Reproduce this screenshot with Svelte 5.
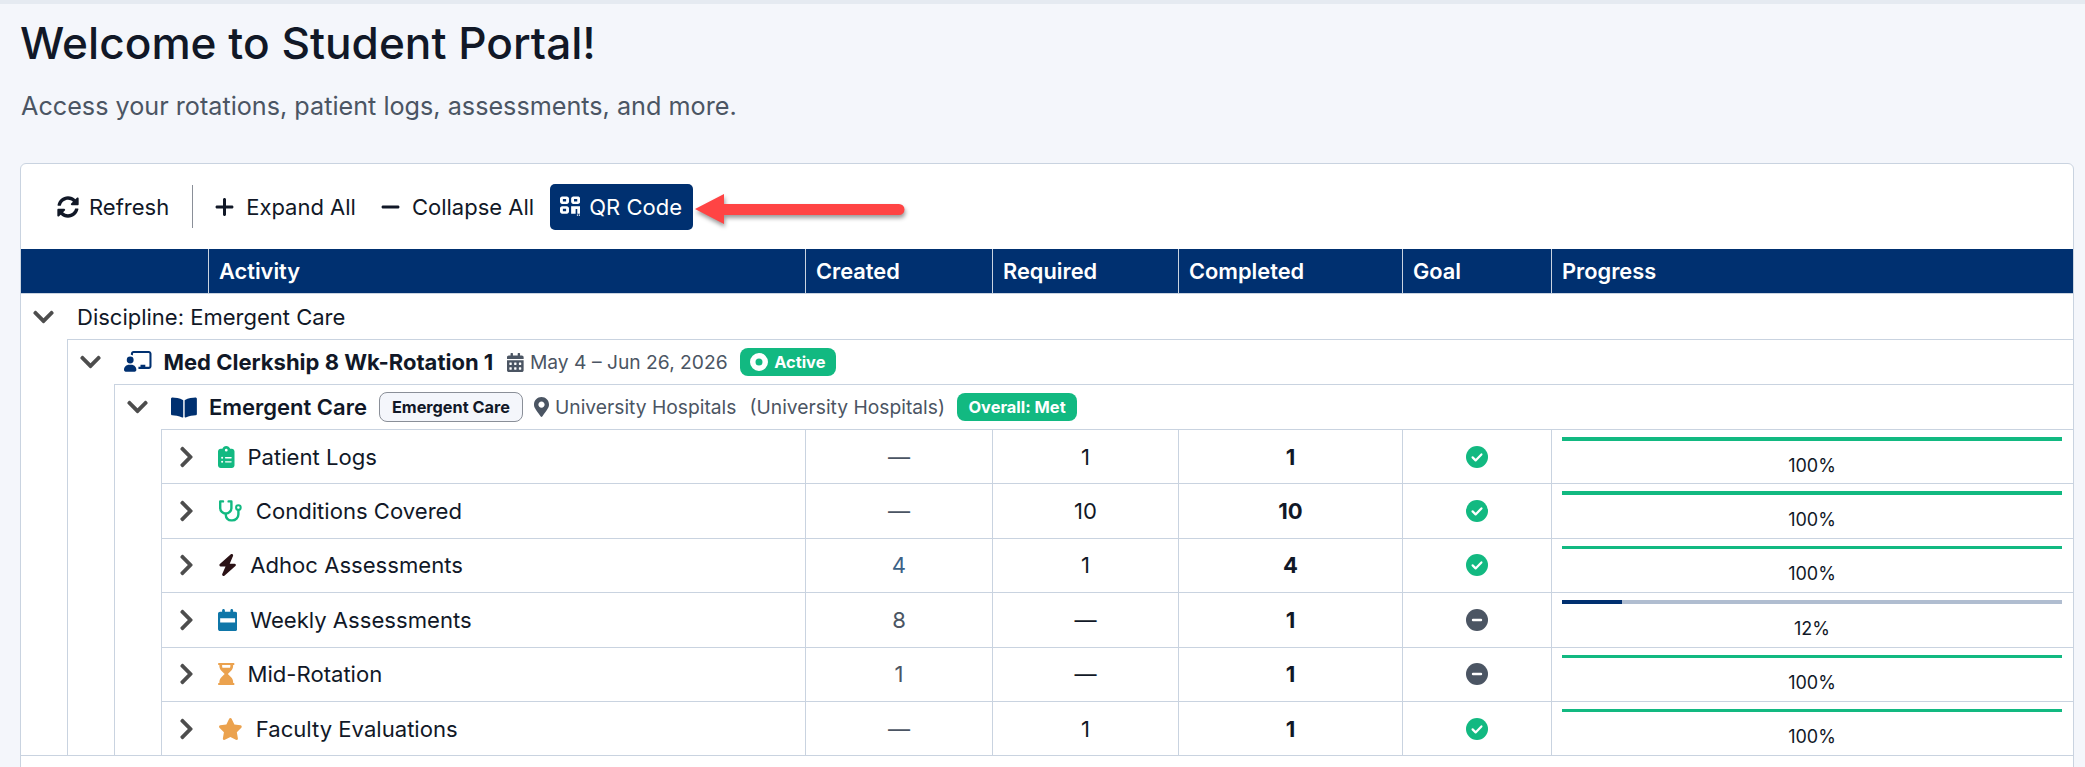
<script>
  // Font Awesome style glyphs, keyed by name
  const glyphs = {
    down: [448, 'M207.029 381.476L12.686 187.132c-9.373-9.373-9.373-24.569 0-33.941l22.667-22.667c9.357-9.357 24.522-9.375 33.901-.04L224 284.505l154.745-154.021c9.379-9.335 24.544-9.317 33.901.04l22.667 22.667c9.373 9.373 9.373 24.569 0 33.941L240.971 381.476c-9.373 9.372-24.569 9.372-33.942 0z'],
    right: [320, 'M285.476 272.971L91.132 467.314c-9.373 9.373-24.569 9.373-33.941 0l-22.667-22.667c-9.357-9.357-9.375-24.522-.04-33.901L188.505 256 34.484 101.255c-9.335-9.379-9.317-24.544.04-33.901l22.667-22.667c9.373-9.373 24.569-9.373 33.941 0L285.475 239.03c9.373 9.372 9.373 24.568.001 33.941z'],
    sync: [512, 'M370.72 133.28C339.458 104.008 298.888 87.962 255.848 88c-77.458.068-144.328 53.178-162.791 126.85-1.344 5.363-6.122 9.15-11.651 9.15H24.103c-7.498 0-13.194-6.807-11.807-14.176C33.933 94.924 134.813 8 256 8c66.448 0 126.791 26.136 171.315 68.685L463.03 40.97C478.149 25.851 504 36.559 504 57.941V192c0 13.255-10.745 24-24 24H345.941c-21.382 0-32.09-25.851-16.971-40.971l41.75-41.749zM32 296h134.059c21.382 0 32.09 25.851 16.971 40.971l-41.75 41.75c31.262 29.273 71.835 45.319 114.876 45.28 77.418-.07 144.315-53.144 162.787-126.849 1.344-5.363 6.122-9.15 11.651-9.15h57.304c7.498 0 13.194 6.807 11.807 14.176C478.067 417.076 377.187 504 256 504c-66.448 0-126.791-26.136-171.315-68.685L48.97 471.03C33.851 486.149 8 475.441 8 454.059V320c0-13.255 10.745-24 24-24z'],
    plus: [448, 'M224 64c-18 0-32 14-32 32v128H64c-18 0-32 14-32 32s14 32 32 32h128v128c0 18 14 32 32 32s32-14 32-32V288h128c18 0 32-14 32-32s-14-32-32-32H256V96c0-18-14-32-32-32z'],
    minus: [448, 'M64 224h320c18 0 32 14 32 32s-14 32-32 32H64c-18 0-32-14-32-32s14-32 32-32z'],
    qr: [448, 'M48 32h104c26 0 48 22 48 48v72c0 26-22 48-48 48H48c-26 0-48-22-48-48V80c0-26 22-48 48-48zm16 56v56h72V88H64zM296 32h104c26 0 48 22 48 48v72c0 26-22 48-48 48H296c-26 0-48-22-48-48V80c0-26 22-48 48-48zm16 56v56h72V88h-72zM48 248h104c26 0 48 22 48 48v72c0 26-22 48-48 48H48c-26 0-48-22-48-48v-72c0-26 22-48 48-48zm16 56v56h72v-56H64zM248 248h200v168h-64V312h-36v104h-100V248zM376 436h28v28h-28zM420 436h28v28h-28z'],
    teach: [640, 'M160 64c0-35 29-64 64-64h352c35 0 64 29 64 64v288c0 35-29 64-64 64H336v-48h48v-48h112v48h80c9 0 16-7 16-16V64c0-9-7-16-16-16H224c-9 0-16 7-16 16v38c-15-8-31-14-48-14V64zM144 128a80 80 0 1 1 0 160 80 80 0 1 1 0-160zm-26 192h52c65 0 118 53 118 118 0 20-16 42-40 42H40c-24 0-40-22-40-42 0-65 53-118 118-118z'],
    book: [576, 'M542.22 32.05c-54.8 3.11-163.72 14.43-230.96 55.59-4.64 2.84-7.27 7.89-7.27 13.17v363.87c0 11.55 12.63 18.85 23.28 13.49 69.18-34.82 169.23-44.32 218.7-46.92 16.89-.89 30.02-14.43 30.02-30.66V62.75c.01-17.71-15.35-31.74-33.77-30.7zM264.73 87.64C197.5 46.48 88.58 35.17 33.78 32.05 15.36 31.01 0 45.04 0 62.75V400.6c0 16.24 13.13 29.78 30.02 30.66 49.49 2.6 149.59 12.11 218.77 46.95 10.62 5.35 23.21-1.94 23.21-13.46V100.63c0-5.29-2.62-10.14-7.27-12.99z'],
    calendar: [448, 'M0 464c0 26.5 21.5 48 48 48h352c26.5 0 48-21.5 48-48V192H0v272zm320-196c0-6.6 5.4-12 12-12h40c6.6 0 12 5.4 12 12v40c0 6.6-5.4 12-12 12h-40c-6.6 0-12-5.4-12-12v-40zm0 128c0-6.6 5.4-12 12-12h40c6.6 0 12 5.4 12 12v40c0 6.6-5.4 12-12 12h-40c-6.6 0-12-5.4-12-12v-40zM192 268c0-6.6 5.4-12 12-12h40c6.6 0 12 5.4 12 12v40c0 6.6-5.4 12-12 12h-40c-6.6 0-12-5.4-12-12v-40zm0 128c0-6.6 5.4-12 12-12h40c6.6 0 12 5.4 12 12v40c0 6.6-5.4 12-12 12h-40c-6.6 0-12-5.4-12-12v-40zM64 268c0-6.6 5.4-12 12-12h40c6.6 0 12 5.4 12 12v40c0 6.6-5.4 12-12 12H76c-6.6 0-12-5.4-12-12v-40zm0 128c0-6.6 5.4-12 12-12h40c6.6 0 12 5.4 12 12v40c0 6.6-5.4 12-12 12H76c-6.6 0-12-5.4-12-12v-40zM400 64h-48V16c0-8.8-7.2-16-16-16h-32c-8.8 0-16 7.2-16 16v48H160V16c0-8.8-7.2-16-16-16h-32c-8.8 0-16 7.2-16 16v48H48C21.5 64 0 85.5 0 112v48h448v-48c0-26.5-21.5-48-48-48z'],
    pin: [384, 'M172.268 501.67C26.97 291.031 0 269.413 0 192 0 85.961 85.961 0 192 0s192 85.961 192 192c0 77.413-26.97 99.031-172.268 309.67-9.535 13.774-29.93 13.773-39.464 0zM192 272c44.183 0 80-35.817 80-80s-35.817-80-80-80-80 35.817-80 80 35.817 80 80 80z'],
    clipboard: [384, 'M192 0c-41.8 0-77.4 26.7-90.5 64H64C28.7 64 0 92.7 0 128v320c0 35.3 28.7 64 64 64h256c35.3 0 64-28.7 64-64V128c0-35.3-28.7-64-64-64h-37.5C269.4 26.7 233.8 0 192 0zm0 64a32 32 0 1 0 0 64 32 32 0 1 0 0-64zM72 272a24 24 0 1 0 48 0 24 24 0 1 0-48 0zm104-16c-8.8 0-16 7.2-16 16s7.2 16 16 16h128c8.8 0 16-7.2 16-16s-7.2-16-16-16H176zM72 368a24 24 0 1 0 48 0 24 24 0 1 0-48 0zm104-16c-8.8 0-16 7.2-16 16s7.2 16 16 16h128c8.8 0 16-7.2 16-16s-7.2-16-16-16H176z'],
    bolt: [448, 'M349.4 44.6c5.9-13.7 1.5-29.7-10.6-38.5s-28.6-8-39.9 1.8l-256 224c-10 8.8-13.6 22.9-8.9 35.3S50.7 288 64 288H175.5L98.6 467.4c-5.9 13.7-1.5 29.7 10.6 38.5s28.6 8 39.9-1.8l256-224c10-8.8 13.6-22.9 8.9-35.3s-16.6-20.7-30-20.7H272.5L349.4 44.6z'],
    week: [448, 'M128 0c18 0 32 14 32 32v32h128V32c0-18 14-32 32-32s32 14 32 32v32h48c26.5 0 48 21.5 48 48v352c0 26.5-21.5 48-48 48H48c-26.5 0-48-21.5-48-48V112c0-26.5 21.5-48 48-48h48V32c0-18 14-32 32-32zM50 215v100h348V215H50z'],
    hourglass: [384, 'M24 0h336c13 0 24 11 24 24s-11 24-24 24h-8v19c0 42-17 83-47 113l-76 76 76 76c30 30 47 71 47 113v19h8c13 0 24 11 24 24s-11 24-24 24H24c-13 0-24-11-24-24s11-24 24-24h8v-19c0-42 17-83 47-113l76-76-76-76C49 150 32 109 32 67V48h-8C11 48 0 37 0 24S11 0 24 0zm72 48v19c0 14 3 28 9 41h174c6-13 9-27 9-41V48H96z'],
    star: [576, 'M316.9 18C311.6 7 300.4 0 288.1 0s-23.4 7-28.8 18L195 150.3 51.4 171.5c-12 1.8-22 10.2-25.7 21.7s-.7 24.2 7.9 32.7L137.8 329 113.2 474.7c-2 12 3 24.2 12.9 31.3s23 8 33.8 2.3l128.3-68.5 128.3 68.5c10.8 5.7 23.9 4.9 33.8-2.3s14.9-19.3 12.9-31.3L438.5 329 542.7 225.9c8.6-8.5 11.7-21.2 7.9-32.7s-13.7-19.9-25.7-21.7L381.2 150.3 316.9 18z']
  };

  const columns = ['', 'Activity', 'Created', 'Required', 'Completed', 'Goal', 'Progress'];

  const activities = [
    { name: 'Patient Logs', icon: 'clipboard', color: '#12b981', created: '—', required: '1', completed: '1', met: true, pct: 100 },
    { name: 'Conditions Covered', icon: 'stethoscope', color: '#12b981', created: '—', required: '10', completed: '10', met: true, pct: 100 },
    { name: 'Adhoc Assessments', icon: 'bolt', color: '#2b1216', created: '4', link: true, required: '1', completed: '4', met: true, pct: 100 },
    { name: 'Weekly Assessments', icon: 'week', color: '#0f76a8', created: '8', required: '—', completed: '1', met: false, pct: 12 },
    { name: 'Mid-Rotation', icon: 'hourglass', color: '#eba24e', created: '1', required: '—', completed: '1', met: false, pct: 100 },
    { name: 'Faculty Evaluations', icon: 'star', color: '#eba24e', created: '—', required: '1', completed: '1', met: true, pct: 100 }
  ];
</script>

{#snippet fa(name, size, color = 'currentColor')}
  <svg class="fa" viewBox="0 0 {glyphs[name][0]} 512" height={size} width={(glyphs[name][0] / 512) * size} fill={color}>
    <path fill-rule="evenodd" d={glyphs[name][1]} />
  </svg>
{/snippet}

<div class="page">
  <h1>Welcome to Student Portal!</h1>
  <p class="lead">Access your rotations, patient logs, assessments, and more.</p>

  <section class="card">
    <div class="toolbar">
      <button class="tool refresh">{@render fa('sync', 22)} Refresh</button>
      <span class="sep"></span>
      <button class="tool">{@render fa('plus', 24)} Expand All</button>
      <button class="tool">{@render fa('minus', 24)} Collapse All</button>
      <button class="tool qr">{@render fa('qr', 23)} QR Code</button>
      <svg class="arrow" width="216" height="40" viewBox="0 0 216 40">
        <path d="M0 17 L29 2 V12 H204 a5 5 0 0 1 0 11 H29 V32 Z" fill="#ff4444" />
      </svg>
    </div>

    <div class="thead">
      {#each columns as col}
        <div class="th">{col}</div>
      {/each}
    </div>

    <div class="level top">
      <div class="group-row first">
        <span class="caret">{@render fa('down', 24, '#4d4d4d')}</span>
        <span>Discipline: Emergent Care</span>
      </div>

      <div class="level">
        <div class="group-row">
          <span class="caret">{@render fa('down', 24, '#4d4d4d')}</span>
          <span class="rot-icon">{@render fa('teach', 22, '#003070')}</span>
          <strong>Med Clerkship 8 Wk-Rotation 1</strong>
          <span class="meta date">{@render fa('calendar', 19, '#4b5563')} May 4 – Jun 26, 2026</span>
          <span class="badge">
            <svg width="18" height="18" viewBox="0 0 18 18"><path fill-rule="evenodd" fill="#fff" d="M9 0a9 9 0 1 1 0 18A9 9 0 0 1 9 0zm0 5.5a3.5 3.5 0 1 0 0 7 3.5 3.5 0 0 0 0-7z" /></svg>
            Active
          </span>
        </div>

        <div class="level">
          <div class="group-row">
            <span class="caret">{@render fa('down', 24, '#4d4d4d')}</span>
            <span class="book-icon">{@render fa('book', 23, '#003070')}</span>
            <strong class="course">Emergent Care</strong>
            <span class="chip">Emergent Care</span>
            <span class="meta site">{@render fa('pin', 20, '#4b5563')} University Hospitals</span>
            <span class="meta parent">(University Hospitals)</span>
            <span class="badge overall">Overall: Met</span>
          </div>

          <div class="level leaves">
            {#each activities as a}
              <div class="leaf">
                <div class="td name">
                  <span class="leaf-caret">{@render fa('right', 24, '#4d4d4d')}</span>
                  {#if a.icon === 'stethoscope'}
                    <svg class="fa" width="24.75" height="22" viewBox="0 0 24.75 22" fill="none" stroke={a.color} stroke-width="2.4" stroke-linecap="round" stroke-linejoin="round">
                      <path d="M5 1.4H2.2V8a5.6 5.6 0 0 0 11.2 0V1.4h-2.8" />
                      <path d="M7.8 13.6V15a5.4 5.4 0 0 0 5.4 5.4h1a6.2 6.2 0 0 0 6.2-6.2V10" />
                      <circle cx="20.4" cy="7.6" r="2.3" stroke-width="2" />
                    </svg>
                  {:else}
                    {@render fa(a.icon, 22, a.color)}
                  {/if}
                  <span>{a.name}</span>
                </div>
                <div class="td num muted" class:link={a.link}>{a.created}</div>
                <div class="td num">{a.required}</div>
                <div class="td num done">{a.completed}</div>
                <div class="td num">
                  {#if a.met}
                    <svg width="22" height="22" viewBox="0 0 22 22"><circle cx="11" cy="11" r="11" fill="#12b981" /><path d="M6.6 11.4l3 3 5.8-6" fill="none" stroke="#fff" stroke-width="2.2" stroke-linecap="round" stroke-linejoin="round" /></svg>
                  {:else}
                    <svg width="22" height="22" viewBox="0 0 22 22"><circle cx="11" cy="11" r="11" fill="#4b5563" /><path d="M7 11h8" stroke="#fff" stroke-width="2.4" stroke-linecap="round" /></svg>
                  {/if}
                </div>
                <div class="td progress">
                  <div class="track"><div class="fill" class:low={a.pct < 100} style="width: {a.pct}%"></div></div>
                  <div class="pct">{a.pct}%</div>
                </div>
              </div>
            {/each}
          </div>
        </div>
      </div>
    </div>
    <div class="tail"></div>
  </section>
</div>

<style>
  :global(body) {
    margin: 0;
    background: #f4f6fb;
    font-family: Inter, "Noto Sans", sans-serif;
    color: #111827;
    overflow: hidden;
  }
  .page {
    height: 767px;
    box-sizing: border-box;
    border-top: 4px solid #e5eaf1;
    padding: 13px 11px 0 20px;
    overflow: hidden;
  }
  h1 {
    margin: 0;
    font-size: 44.2px;
    line-height: 52px;
    font-weight: 500;
    color: #111827;
  }
  .lead {
    margin: 19px 0 0 1px;
    font-size: 25.2px;
    line-height: 36px;
    color: #4b5563;
  }
  .card {
    margin-top: 39px;
    background: #fff;
    border: 1px solid #c9d3e0;
    border-radius: 6px 6px 0 0;
  }
  .toolbar {
    display: flex;
    align-items: center;
    height: 85px;
    padding-left: 24px;
    box-sizing: border-box;
  }
  .tool {
    display: flex;
    align-items: center;
    gap: 11px;
    height: 46px;
    padding: 0 12px;
    border: 0;
    border-radius: 5px;
    background: transparent;
    font: 400 22px Inter, sans-serif;
    color: #111827;
  }
  .refresh { gap: 10px; }
  .sep {
    flex: none;
    width: 1px;
    height: 43px;
    margin: 0 9px 0 11px;
    background: #8a8f98;
  }
  .qr {
    margin-left: 4px;
    padding: 0 11px 0 10px;
    gap: 9px;
    background: #003070;
    color: #fff;
  }
  .arrow {
    margin: 10px 0 0 2px;
    filter: drop-shadow(1px 3px 2px rgba(0, 0, 0, 0.4));
    overflow: visible;
  }
  .thead, .leaf {
    display: grid;
  }
  .thead {
    grid-template-columns: 187px 597px 187px 186px 224px 149px 1fr;
    height: 45px;
    background: #003070;
    border-bottom: 1px solid #c9d3e0;
    box-sizing: border-box;
  }
  .th {
    display: flex;
    align-items: center;
    padding-left: 10px;
    border-left: 1px solid #c9d3e0;
    font-size: 21.8px;
    font-weight: 600;
    color: #fff;
  }
  .th:first-child { border-left: 0; }
  .level {
    margin-left: 46px;
    border-left: 1px solid #c9d3e0;
  }
  .level.top {
    margin-left: 0;
    border-left: 0;
  }
  .group-row {
    display: flex;
    align-items: center;
    height: 45px;
    box-sizing: border-box;
    border-top: 1px solid #c9d3e0;
    font-size: 22px;
  }
  .group-row.first {
    border-top: 0;
  }
  .caret {
    display: flex;
    justify-content: center;
    width: 21px;
    margin: 0 23px 0 1px;
    padding-left: 11px;
  }
  .rot-icon { display: flex; margin-right: 12px; }
  .book-icon { display: flex; margin-right: 12px; }
  strong { font-weight: 700; }
  .course { font-weight: 600; }
  .fa { flex: none; }
  .meta {
    display: inline-flex;
    align-items: center;
    gap: 6px;
    font-size: 19.25px;
    color: #4b5563;
  }
  .date { margin-left: 14px; }
  .site { margin-left: 11px; }
  .parent { margin-left: 13px; }
  .badge {
    display: inline-flex;
    align-items: center;
    gap: 6px;
    height: 28px;
    margin-left: 12px;
    padding: 0 10.5px;
    border-radius: 8px;
    background: #12b981;
    color: #fff;
    font-size: 16.4px;
    font-weight: 700;
  }
  .overall { padding: 0 11.5px; }
  .chip {
    display: inline-flex;
    align-items: center;
    height: 30px;
    box-sizing: border-box;
    margin-left: 12px;
    padding: 0 12px;
    border: 1px solid #8a8f98;
    border-radius: 8px;
    background: #f4f6fb;
    font-size: 16.3px;
    font-weight: 700;
    color: #111827;
  }
  .leaf {
    grid-template-columns: 643px 187px 186px 224px 149px 1fr;
    height: 54.4px;
    box-sizing: border-box;
    border-top: 1px solid #c9d3e0;
  }
  .td {
    display: flex;
    align-items: center;
    justify-content: center;
    border-left: 1px solid #c9d3e0;
    font-size: 22.1px;
  }
  .name {
    justify-content: flex-start;
    gap: 13px;
    border-left: 0;
    padding-left: 17px;
  }
  .leaf-caret {
    display: flex;
    width: 15px;
    margin-right: 11px;
  }
  .muted { color: #4b5563; }
  .link { color: #3b6186; }
  .done { font-weight: 700; }
  .progress {
    flex-direction: column;
    justify-content: flex-start;
    align-items: stretch;
    padding: 7px 11px 0 10px;
  }
  .track {
    height: 3.5px;
    background: #b0bdd0;
  }
  .fill {
    height: 100%;
    background: #12b981;
  }
  .fill.low { background: #003070; }
  .pct {
    margin-top: 13px;
    text-align: center;
    font-size: 18px;
    line-height: 24px;
  }
  .tail {
    height: 12px;
    border-top: 1px solid #c9d3e0;
  }
</style>
